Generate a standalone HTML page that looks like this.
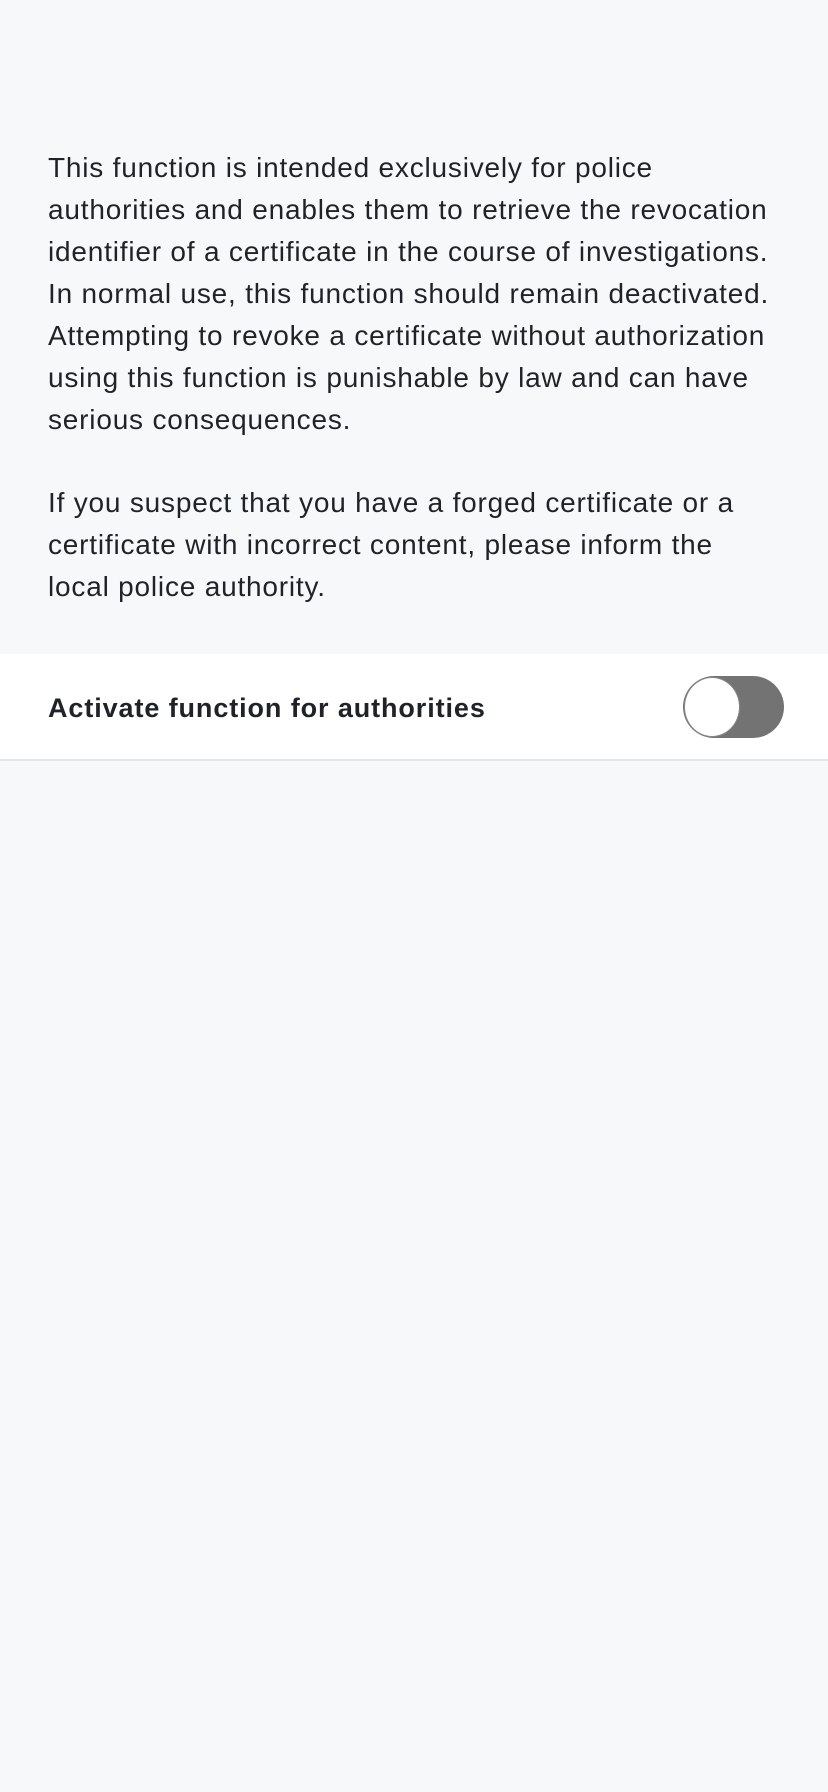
<!DOCTYPE html>
<html><head><meta charset="utf-8"><style>
body{margin:0;width:828px;height:1792px;background:#f7f8fa;font-family:"Liberation Sans",sans-serif;color:#1f2328;overflow:hidden}
.p{position:absolute;left:48px;font-size:28px;letter-spacing:0.8px;line-height:42px;white-space:nowrap}
.row{position:absolute;left:0;top:654px;width:828px;height:105px;background:#fff;border-bottom:2px solid #e4e6ea}
.lbl{position:absolute;left:48px;top:39px;font-size:27px;letter-spacing:0.9px;font-weight:bold;color:#1f2328}
.tg{position:absolute;left:683px;top:22px;width:101px;height:62px;border-radius:31px;background:#737373}
.kn{position:absolute;left:2px;top:2px;width:54px;height:58px;border-radius:50%;background:#fff;box-shadow:0 0 0 1px #888}
</style></head><body>
<div class="p" style="top:147px">This function is intended exclusively for police<br>authorities and enables them to retrieve the revocation<br>identifier of a certificate in the course of investigations.<br>In normal use, this function should remain deactivated.<br>Attempting to revoke a certificate without authorization<br>using this function is punishable by law and can have<br>serious consequences.</div>
<div class="p" style="top:482px">If you suspect that you have a forged certificate or a<br>certificate with incorrect content, please inform the<br>local police authority.</div>
<div class="row"><div class="lbl">Activate function for authorities</div><div class="tg"><div class="kn"></div></div></div>
</body></html>
